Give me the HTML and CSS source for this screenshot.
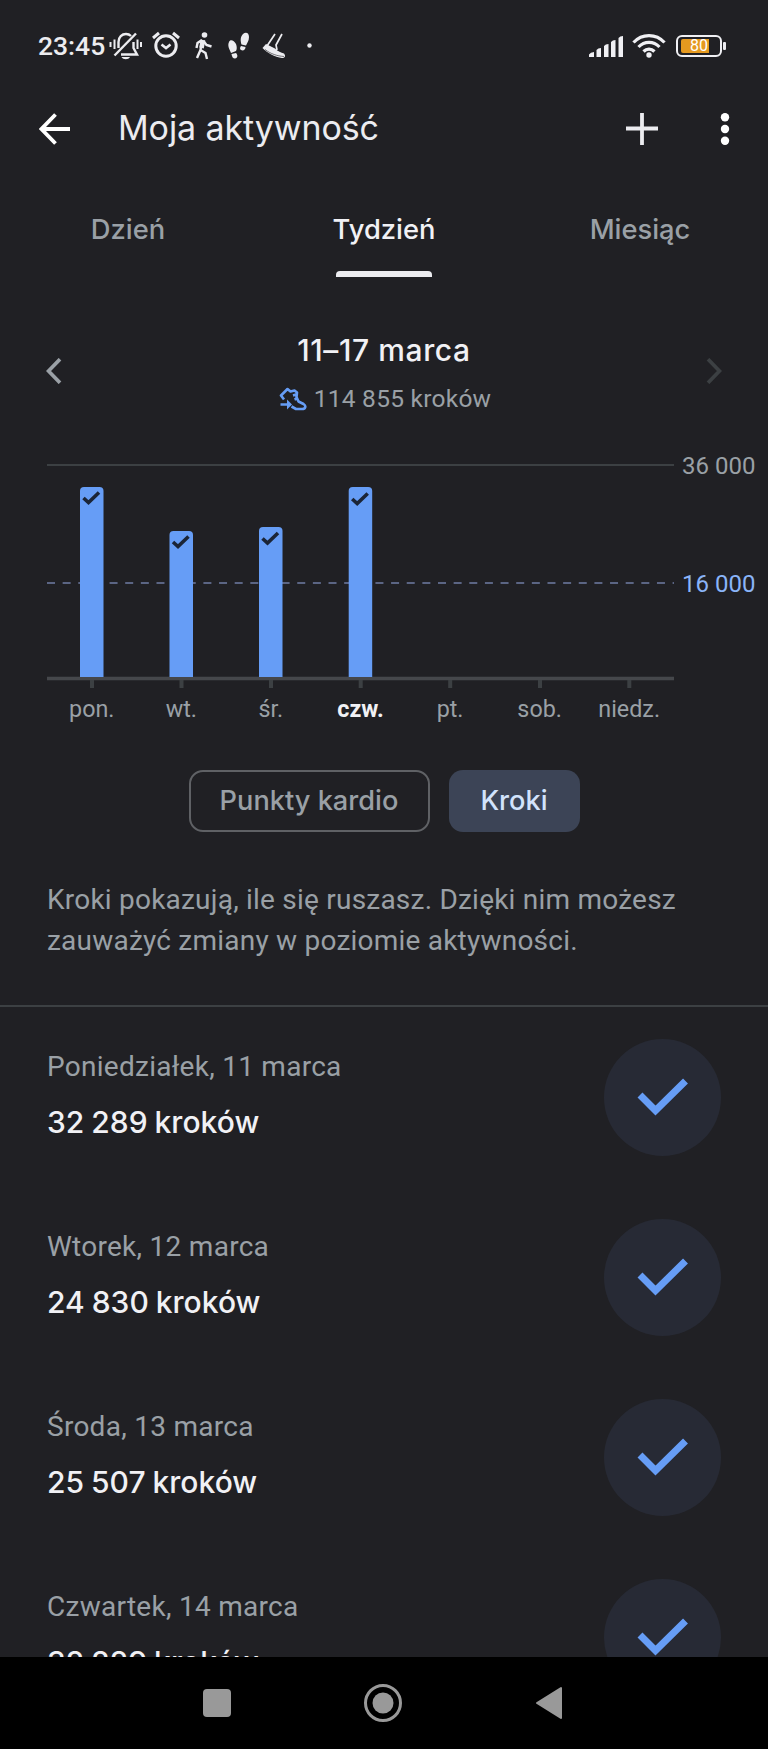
FILE: index.html
```html
<!DOCTYPE html>
<html lang="pl">
<head>
<meta charset="utf-8">
<title>Moja aktywność</title>
<link rel="stylesheet" href="styles.css">
</head>
<body>
<div class="screen">
  <div class="status">
    <span class="clock">23:45</span>
    <svg class="status-left" width="210" height="32" viewBox="0 0 210 32" fill="none" stroke="#ececf0" stroke-width="2.4">
      <path d="M9.500 18V12C9.500 7 13 4 17 4C19 4 20.500 4.500 22 6M24.500 12V18L28 24.500H12" />
      <path d="M5.500 25.500L27 3.500" />
      <path d="M1.500 12V17M5.500 9.500V19M28.500 9.500V19M32 12V17" stroke-width="2" />
      <path d="M12.500 27H21C19.500 30 14 30 12.500 27Z" fill="#ececf0" stroke="none" />
      <circle cx="57" cy="16" r="10.200" stroke-width="3" />
      <path d="M44 8L50 3M70 8L64 3" stroke-width="3" />
      <path d="M52.500 14.500L57 18L61.500 14.500" stroke-width="2.600" />
      <circle cx="95.500" cy="5" r="2.800" fill="#ececf0" stroke="none" />
      <path d="M93 10L91.500 20L96.500 23L98 29M91.500 20L88 28M93 10L88.500 13L87.500 18M94.500 11L97.500 15L102.500 16.500" stroke-width="2.400" />
      <path d="M94 10L92.500 18" stroke-width="4.600" />
      <g fill="#ececf0" stroke="none">
        <path d="M120 12C121 9 125 10 127 14C128 17 128 19 127 21L122 23C121 20 118 16 120 12ZM122.500 24L127 23C129 25 129 28 126 28.500C124 28.500 123 27 122.500 24Z" />
        <path d="M134 4C137 1.500 140 3 140 7C140 11 138 13 137 15.500L132.500 14.500C131.500 11 131 7 134 4ZM132 16L136.500 17C136.500 20 134 21 132 20C130.500 19 131 17.500 132 16Z" />
        <path d="M157 14L166 18.500C169 21.500 172 22.500 175 23.500C177 26 176 28 173 28C166 27 158 23 153.500 18Z" />
        <circle cx="200.500" cy="15.500" r="2.200" />
      </g>
      <path d="M166 4L158 16M173 4L167 15L168 20" stroke-width="1.700" />
      <path d="M156 19.500C162 24 168 26 175 26.500" stroke="#202024" stroke-width=".6" />
    </svg>
    <span class="spacer"></span>
    <svg class="signal" width="35" height="23" viewBox="0 0 35 23" fill="#f0f0f4">
      <path d="M0 22V19.500Q1.500 17 5 17V22Z" /><path d="M7.500 22V15Q9 13 12 13V22Z" /><path d="M15 22V11Q16.500 9 19.500 9V22Z" /><path d="M22 22V7Q23.500 5 26.500 5V22Z" /><path d="M29.500 22V3Q31 1 34 1V22Z" />
    </svg>
    <svg class="wifi" width="34" height="26" viewBox="0 0 34 26" fill="none" stroke="#f0f0f4" stroke-width="3.200">
      <path d="M1.500 9.500C10 .2 24 .2 32.500 9.500M6.500 14C12.500 7.800 21.500 7.800 27.500 14M11.500 18.500C14.800 15.200 19.200 15.200 22.500 18.500" />
      <circle cx="17" cy="22" r="2.700" fill="#f0f0f4" stroke="none" />
    </svg>
    <span class="battery"><span class="charge"></span><span class="percent">80</span></span><span class="battery-tip"></span>
  </div>

  <header class="appbar">
    <svg class="back" width="32" height="32" viewBox="0 0 32 32" fill="none" stroke="#fff" stroke-width="3.800"><path d="M16.500 1.500L2.500 16L16.500 30.500M2.500 16H31" /></svg>
    <h1 class="title">Moja aktywność</h1>
    <svg class="add" width="32" height="32" viewBox="0 0 32 32" stroke="#ececf0" stroke-width="3.800"><path d="M0 15.500H32M16 0V32" /></svg>
    <svg width="10" height="32" viewBox="0 0 10 32" fill="#fff"><circle cx="5" cy="4.300" r="4.200" /><circle cx="5" cy="16" r="4.200" /><circle cx="5" cy="27.700" r="4.200" /></svg>
  </header>

  <nav class="tabs">
    <span class="tab">Dzień</span>
    <span class="tab active">Tydzień<i class="indicator"></i></span>
    <span class="tab">Miesiąc</span>
  </nav>

  <section class="period">
    <svg class="prev" width="16" height="26" viewBox="0 0 16 26" fill="none" stroke="#9aa0a6" stroke-width="3.700"><path d="M14 1.200L2.500 13L14 24.800" /></svg>
    <div class="period-text">
      <h2 class="range">11–17 marca</h2>
      <div class="total">
        <svg width="28" height="24" viewBox="0 0 28 24" fill="none" stroke="#669df6" stroke-width="2.600" stroke-linejoin="round"><path d="M5 12.500L2 8.500L8.500 2L11.500 4.500L15.500 3.500L18 5.500L17.500 10L19.500 14.500L24.500 17C27.500 19 26.500 22 23 22H17L12.500 19.500M14 8.500L17 7.500M15.500 12.500L18 11.500M1.500 17.500H9" /><path d="M8 12.500V22.500L13 17.500Z" fill="#669df6" stroke="none" /></svg>
        <span class="total-label">114 855 kroków</span>
      </div>
    </div>
    <svg class="next" width="16" height="26" viewBox="0 0 16 26" fill="none" stroke="#3c4043" stroke-width="3.700"><path d="M2 1.200L13.500 13L2 24.800" /></svg>
  </section>

  <section class="chart">
    <svg class="plot" width="627" height="226" viewBox="47 463 627 226">
      <path d="M47 465H674" stroke="#3c4043" stroke-width="2" />
      <path d="M47 583H674" stroke="#5b6584" stroke-width="2" stroke-dasharray="8 7.640" />
      <path d="M47 678.500H674" stroke="#45474b" stroke-width="3.600" />
      <path d="M92 680V688M181.500 680V688M271 680V688M360.700 680V688M450.200 680V688M540 680V688M629.300 680V688" stroke="#3c4043" stroke-width="4" />
      <g fill="#669df6">
        <path d="M80 677V491Q80 487 84 487H99.500Q103.500 487 103.500 491V677Z" />
        <path d="M169.500 677V535Q169.500 531 173.500 531H189Q193 531 193 535V677Z" />
        <path d="M259 677V531Q259 527 263 527H278.500Q282.500 527 282.500 531V677Z" />
        <path d="M348.700 677V491Q348.700 487 352.700 487H368.200Q372.200 487 372.200 491V677Z" />
      </g>
      <g fill="none" stroke="#1b2537" stroke-width="3.600">
        <path d="M83.500 498L88.500 502.500L99 492.500" /><path d="M173 542L178 546.500L188.500 536.500" /><path d="M262.500 538.500L267.500 543L278 533" /><path d="M352.200 499L357.200 503.500L367.700 493.500" />
      </g>
    </svg>
    <div class="scale"><span>36 000</span><span class="goal">16 000</span></div>
    <div class="days"><span>pon.</span><span>wt.</span><span>śr.</span><span class="today">czw.</span><span>pt.</span><span>sob.</span><span>niedz.</span></div>
  </section>

  <div class="chips">
    <button class="chip cardio">Punkty kardio</button>
    <button class="chip selected">Kroki</button>
  </div>

  <p class="about">Kroki pokazują, ile się ruszasz. Dzięki nim możesz<br>zauważyć zmiany w poziomie aktywności.</p>

  <ul class="log">
    <li class="entry"><div><div class="date">Poniedziałek, 11 marca</div><div class="steps">32 289 kroków</div></div>
      <span class="done"><svg width="52" height="40" viewBox="0 0 52 40" fill="none" stroke="#669df6" stroke-width="7"><path d="M3 18L18.500 33.500L48.500 4" /></svg></span></li>
    <li class="entry"><div><div class="date">Wtorek, 12 marca</div><div class="steps">24 830 kroków</div></div>
      <span class="done"><svg width="52" height="40" viewBox="0 0 52 40" fill="none" stroke="#669df6" stroke-width="7"><path d="M3 18L18.500 33.500L48.500 4" /></svg></span></li>
    <li class="entry"><div><div class="date">Środa, 13 marca</div><div class="steps">25 507 kroków</div></div>
      <span class="done"><svg width="52" height="40" viewBox="0 0 52 40" fill="none" stroke="#669df6" stroke-width="7"><path d="M3 18L18.500 33.500L48.500 4" /></svg></span></li>
    <li class="entry"><div><div class="date">Czwartek, 14 marca</div><div class="steps">32 229 kroków</div></div>
      <span class="done"><svg width="52" height="40" viewBox="0 0 52 40" fill="none" stroke="#669df6" stroke-width="7"><path d="M3 18L18.500 33.500L48.500 4" /></svg></span></li>
  </ul>

  <footer class="sysnav">
    <svg width="28" height="28" viewBox="0 0 28 28"><rect width="28" height="28" rx="4" fill="#999" /></svg>
    <svg width="40" height="40" viewBox="0 0 40 40"><circle cx="20" cy="20" r="17.500" fill="none" stroke="#999" stroke-width="3" /><circle cx="20" cy="20" r="10.500" fill="#999" /></svg>
    <svg width="28" height="34" viewBox="0 0 28 34"><path d="M26 2V32L2 17Z" fill="#999" stroke="#999" stroke-width="2" stroke-linejoin="round" /></svg>
  </footer>
</div>
</body>
</html>
```

FILE: styles.css
```css
* { box-sizing: border-box; }
body { margin: 0; background: #202024; font-family: Roboto, "Noto Sans", sans-serif; color: #9aa0a6; }
svg { display: block; flex: none; }
h1, h2, p, ul { margin: 0; padding: 0; font-weight: 400; }

.screen { width: 768px; height: 1749px; display: flex; flex-direction: column; overflow: hidden; background: #202024; }
.screen > * { flex: none; }

.status { height: 92px; display: flex; align-items: center; padding: 0 42px 0 38px; }
.clock { width: 71px; margin-top: -2px; font-size: 26.500px; font-weight: 500; color: #ececf0; white-space: nowrap; }
.spacer { flex: 1; }
.signal { margin: 0 8px 0 0; }
.wifi { margin-right: 10px; }
.battery { display: grid; position: relative; width: 46px; height: 22px; border: 2px solid #f0f0f4; border-radius: 6px; padding: 2px 3px; }
.charge { grid-area: 1 / 1; width: 28px; background: #e5991f; border-radius: 2px 0 0 2px; }
.percent { grid-area: 1 / 1; align-self: center; padding-left: 9px; line-height: 14px; font-size: 16px; color: #fff; }
.battery-tip { width: 3px; height: 8px; margin-left: 1px; border-radius: 1px; background: #ececf0; }

.appbar { height: 73px; display: flex; align-items: center; padding: 0 38.500px 0 39px; }
.title { flex: 1; margin: -2px 0 0 47px; font: 400 34px/44px Inter, sans-serif; letter-spacing: -.1px; color: #ececf0; white-space: nowrap; }
.add { margin-right: 61.500px; }

.tabs { height: 112px; display: grid; grid-template-columns: repeat(3, 1fr); }
.tab { display: flex; flex-direction: column; align-items: center; justify-content: space-between; padding-top: 47px; font: 500 27.300px/36px Inter, sans-serif; }
.active { color: #f1f1f5; }
.indicator { width: 96px; height: 6px; border-radius: 4px 4px 0 0; background: #ececf0; }

.period { height: 186px; display: flex; justify-content: space-between; padding: 0 46px; }
.prev, .next { margin-top: 81px; }
.period-text { display: flex; flex-direction: column; align-items: center; padding-top: 53px; }
.range { font: 500 30px/40px Inter, sans-serif; letter-spacing: .6px; color: #f1f1f5; white-space: nowrap; }
.total { display: flex; align-items: center; gap: 7px; margin-top: 14px; padding-left: 2px; }
.total-label { font-size: 24.500px; letter-spacing: .25px; line-height: 30px; white-space: nowrap; }

.chart { height: 307px; display: grid; grid-template: 226px 44px / 627px 86px; padding-left: 47px; }
.scale { padding-left: 8px; font-size: 24px; line-height: 28px; display: flex; flex-direction: column; gap: 90px; margin-top: -11px; white-space: nowrap; }
.goal { color: #8ab4f8; }
.days { display: grid; grid-template-columns: repeat(7, 1fr); text-align: center; font-size: 23.300px; line-height: 41px; }
.today { color: #f1f1f5; font-weight: 700; }

.chips { height: 62px; display: flex; justify-content: center; gap: 19px; }
.chip { width: 131px; height: 62px; padding: 0; border: 0; border-radius: 14px; font: 500 27.200px/62px Inter, sans-serif; white-space: nowrap; }
.cardio { width: 241px; border: 2px solid #5f6165; background: none; color: #9aa0a6; line-height: 58px; }
.selected { background: #3c4456; color: #d2e3fc; }

.about { height: 175px; padding: 48px 0 0 47px; border-bottom: 2px solid #3c4043; font-size: 28px; letter-spacing: .22px; line-height: 40.500px; white-space: nowrap; }

.log { height: 650px; overflow: hidden; list-style: none; }
.entry { height: 180px; display: flex; justify-content: space-between; align-items: flex-start; padding: 31.500px 47px 0; }
.date { margin-top: 10.500px; font-size: 28px; letter-spacing: .27px; line-height: 36px; white-space: nowrap; }
.steps { margin-top: 17px; font: 500 30px/40px Inter, sans-serif; letter-spacing: .05px; word-spacing: -1.200px; color: #f1f1f5; white-space: nowrap; }
.done { width: 117px; height: 117px; border-radius: 50%; background: #272a35; display: grid; place-items: center; }

.sysnav { height: 92px; display: flex; justify-content: space-between; align-items: center; padding: 0 205px 0 203px; background: #000; }
```
